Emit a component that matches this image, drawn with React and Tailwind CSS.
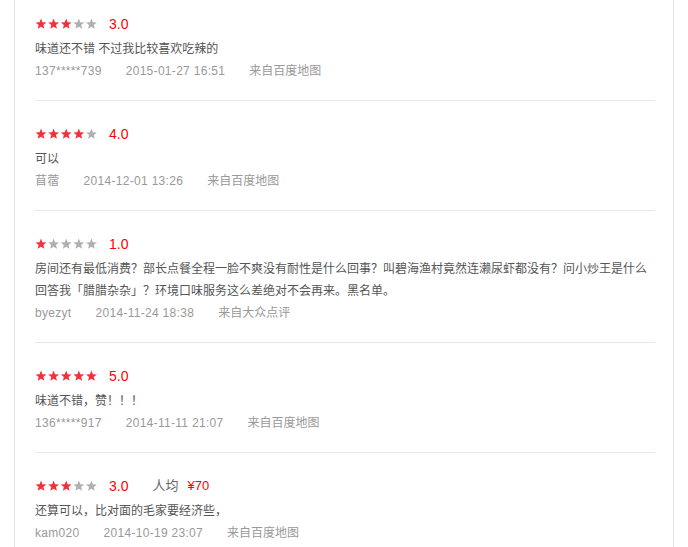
import React from 'react';

const reviews = [
    { score: 3, text: '味道还不错 不过我比较喜欢吃辣的', user: '137*****739', time: '2015-01-27 16:51', from: '来自百度地图' },
    { score: 4, text: '可以', user: '苜蓿', time: '2014-12-01 13:26', from: '来自百度地图' },
    {
        score: 1,
        text: '房间还有最低消费？部长点餐全程一脸不爽没有耐性是什么回事？叫碧海渔村竟然连濑尿虾都没有？问小炒王是什么回答我「腊腊杂杂」？环境口味服务这么差绝对不会再来。黑名单。',
        user: 'byezyt',
        time: '2014-11-24 18:38',
        from: '来自大众点评',
    },
    { score: 5, text: '味道不错，赞！！！', user: '136*****917', time: '2014-11-11 21:07', from: '来自百度地图' },
    { score: 3, price: '¥70', text: '还算可以，比对面的毛家要经济些，', user: 'kam020', time: '2014-10-19 23:07', from: '来自百度地图' },
];

const STAR = 'M6 0.6 L7.45 4.2 L11.4 4.45 L8.35 6.95 L9.35 10.8 L6 8.7 L2.65 10.8 L3.65 6.95 L0.6 4.45 L4.55 4.2 Z';

// five-star row, red for the score, grey for the rest
const Stars = ({ score }) => (
    <svg width="64" height="12" viewBox="0 0 64 12" className="block">
        {[0, 1, 2, 3, 4].map(i => (
            <path
                key={i}
                d={STAR}
                transform={`translate(${i * 12.6} 0)`}
                fill={i < score ? '#f0323c' : '#b0b0b0'}
            />
        ))}
    </svg>
);

const Review = ({ item, first, last }) => (
    <div className={`${first ? 'pt-4' : 'pt-[25px]'} pb-[18px] ${last ? '' : 'border-b border-[#e8e8e8]'}`}>
        <div className="flex items-center h-4">
            <Stars score={item.score} />
            <span className="ml-[10px] text-[14px] text-[#ff0000]">{item.score}.0</span>
            {item.price && (
                <>
                    <span className="ml-6 text-[13px] text-[#666]">人均</span>
                    <span className="ml-[9px] text-[13px] text-[#ff0000]">{item.price}</span>
                </>
            )}
        </div>
        <p className="mt-[6px] text-[12px] leading-[22px] text-[#555]">{item.text}</p>
        <div className="text-[12px] leading-[22px] text-[#999] flex">
            <span className="mr-6 tracking-[0.3px]">{item.user}</span>
            <span className="mr-6 tracking-[0.3px]">{item.time}</span>
            <span>{item.from}</span>
        </div>
    </div>
);

export default function App() {
    return (
        <div
            className="min-h-[547px] bg-white"
            style={{ fontFamily: '"Liberation Sans", "Noto Sans CJK SC", sans-serif' }}
        >
            <div className="ml-[14px] w-[660px] min-h-[547px] border-x border-[#e3e3e3] pl-5 pr-[18px]">
                {reviews.map((item, i) => (
                    <Review key={i} item={item} first={i === 0} last={i === reviews.length - 1} />
                ))}
            </div>
        </div>
    );
}
